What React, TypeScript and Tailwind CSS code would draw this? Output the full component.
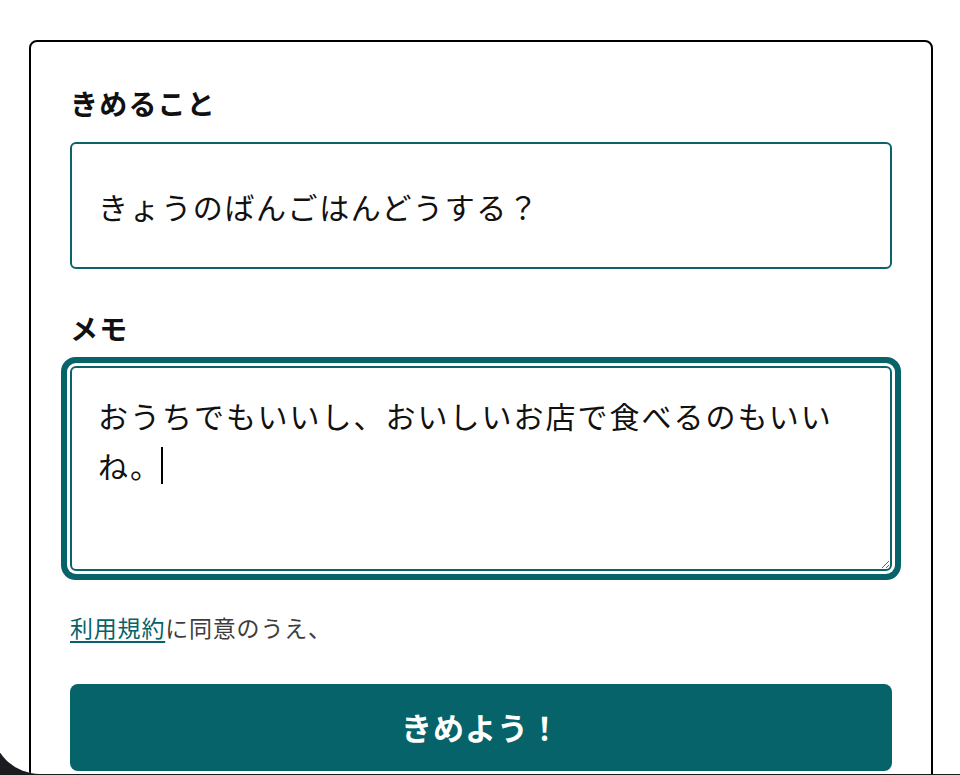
import { useEffect, useRef } from "react"

export default function App() {
  const memoRef = useRef<HTMLTextAreaElement>(null)

  useEffect(() => {
    const el = memoRef.current
    if (!el) return
    el.focus()
    el.setSelectionRange(el.value.length, el.value.length)
  }, [])

  return (
    <div className="h-[775px] w-[960px] overflow-hidden bg-[#1b1b20] font-['Noto_Sans_CJK_JP','Noto_Sans',sans-serif]">
      <div className="-ml-[8px] h-[774px] w-[968px] overflow-hidden rounded-bl-[48px] bg-white">
        <div className="ml-[37px] mt-[40px] w-[904px] rounded-[8px] border-2 border-black px-[39px] pb-[60px] pt-[41px]">
          <label className="block text-[28px] font-bold leading-[40px] tracking-[1.2px] text-[#111]">
            きめること
          </label>
          <input
            type="text"
            defaultValue="きょうのばんごはんどうする？"
            className="mt-[19px] block h-[127px] w-full rounded-[6px] border-2 border-[#0b6369] bg-white pl-[26px] text-[30px] tracking-[1.6px] text-[#111] outline-none"
          />

          <label className="mt-[39px] block text-[28px] font-bold leading-[40px] tracking-[1.2px] text-[#111]">
            メモ
          </label>
          <div className="relative mt-[18px]">
            <textarea
              ref={memoRef}
              defaultValue="おうちでもいいし、おいしいお店で食べるのもいいね。"
              className="block h-[205px] w-full rounded-[6px] border-2 border-[#0b6369] bg-white pl-[26px] pr-[20px] pt-[22px] text-[30px] leading-[50px] tracking-[2px] text-[#111] caret-transparent shadow-[0_0_0_3px_#fff,0_0_0_9px_#066369] outline-none"
            />
            {/* caret */}
            <span className="pointer-events-none absolute left-[91px] top-[81px] h-[37px] w-[2px] bg-black" />
          </div>

          <p className="mt-[39px] text-[23px] leading-[34px] tracking-[0.8px] text-[#3d3d3d]">
            <a href="#terms" className="text-[#066369] underline underline-offset-[4px]">
              利用規約
            </a>
            に同意のうえ、
          </p>

          <button
            type="button"
            className="mt-[40px] flex h-[87px] w-full items-center justify-center rounded-[8px] bg-[#066369] text-[31px] font-bold tracking-[1px] text-white"
          >
            きめよう！
          </button>
        </div>
      </div>
    </div>
  )
}
